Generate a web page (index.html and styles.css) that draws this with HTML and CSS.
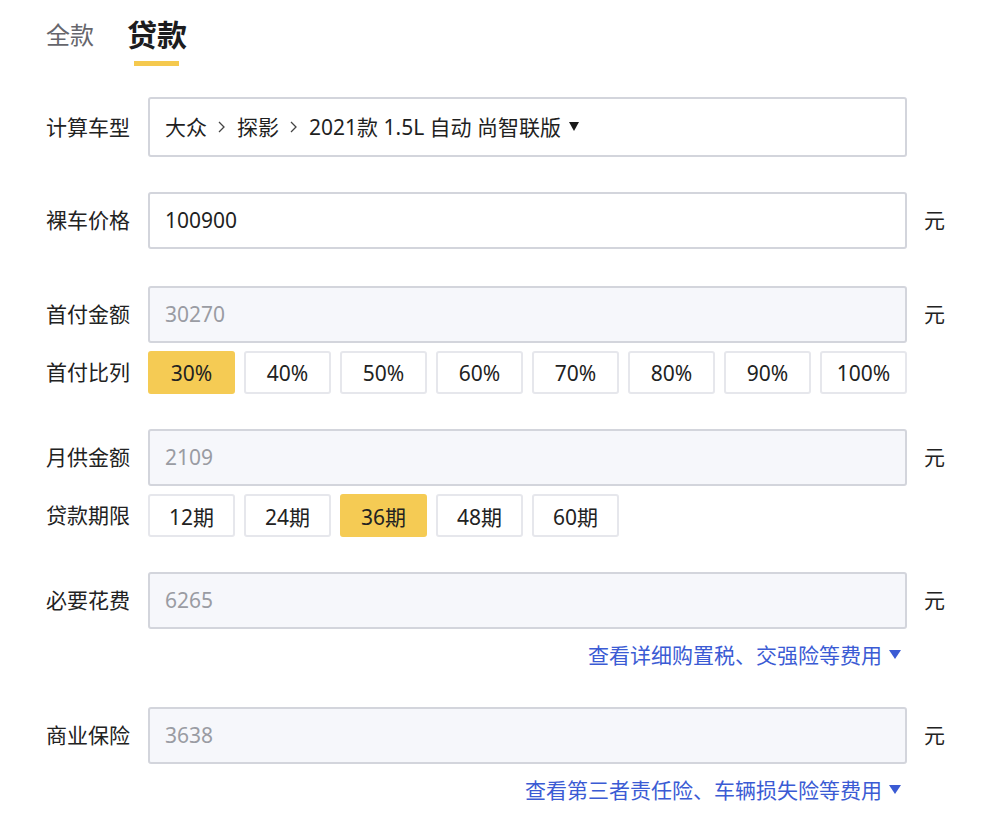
FILE: index.html
```html
<!DOCTYPE html>
<html lang="zh">
<head>
<meta charset="utf-8">
<link rel="stylesheet" href="styles.css">
</head>
<body>
<div class="page">
  <div class="tabs">
    <div class="tab">全款</div>
    <div class="tab active">贷款</div>
  </div>

  <div class="row first">
    <div class="label">计算车型</div>
    <div class="field model">大众<svg class="sep" width="7" height="12" viewBox="0 0 7 12"><path d="M1 1 L6 6 L1 11" fill="none" stroke="#444" stroke-width="1.3"/></svg>探影<svg class="sep" width="7" height="12" viewBox="0 0 7 12"><path d="M1 1 L6 6 L1 11" fill="none" stroke="#444" stroke-width="1.3"/></svg>2021款 1.5L 自动 尚智联版<span class="caret"></span></div>
  </div>

  <div class="row second">
    <div class="label">裸车价格</div>
    <div class="field white">100900</div>
    <div class="unit">元</div>
  </div>

  <div class="group g1">
    <div class="row">
      <div class="label">首付金额</div>
      <div class="field grey">30270</div>
      <div class="unit">元</div>
    </div>
    <div class="row opts-row">
      <div class="label">首付比列</div>
      <div class="opts">
        <div class="opt on">30%</div>
        <div class="opt">40%</div>
        <div class="opt">50%</div>
        <div class="opt">60%</div>
        <div class="opt">70%</div>
        <div class="opt">80%</div>
        <div class="opt">90%</div>
        <div class="opt">100%</div>
      </div>
    </div>
  </div>

  <div class="group">
    <div class="row">
      <div class="label">月供金额</div>
      <div class="field grey">2109</div>
      <div class="unit">元</div>
    </div>
    <div class="row opts-row">
      <div class="label">贷款期限</div>
      <div class="opts">
        <div class="opt">12期</div>
        <div class="opt">24期</div>
        <div class="opt on">36期</div>
        <div class="opt">48期</div>
        <div class="opt">60期</div>
      </div>
    </div>
  </div>

  <div class="group">
    <div class="row">
      <div class="label">必要花费</div>
      <div class="field grey">6265</div>
      <div class="unit">元</div>
    </div>
    <div class="link">查看详细购置税、交强险等费用<span class="bcaret"></span></div>
  </div>

  <div class="group">
    <div class="row">
      <div class="label">商业保险</div>
      <div class="field grey">3638</div>
      <div class="unit">元</div>
    </div>
    <div class="link">查看第三者责任险、车辆损失险等费用<span class="bcaret"></span></div>
  </div>
</div>
</body>
</html>
```

FILE: styles.css
```css
* { box-sizing: border-box; }
html, body { margin: 0; padding: 0; background: #fff; }
body {
  font-family: "Noto Sans", "Noto Sans CJK SC", sans-serif;
  color: #222;
  width: 996px;
  height: 814px;
  overflow: hidden;
}
.page { padding: 3px 0 0 46px; }

.tabs { display: flex; align-items: flex-end; gap: 33px; height: 54px; }
.tab {
  font-size: 24px;
  color: #66666c;
  line-height: 44px;
  position: relative;
}
.tab.active {
  font-size: 30px;
  font-weight: 700;
  color: #1c1c1e;
  line-height: 44px;
}
.tab.active::after {
  content: "";
  position: absolute;
  left: 7px;
  width: 45px;
  bottom: -9px;
  height: 5px;
  background: #f5c94e;
}

.row { display: flex; align-items: center; margin-top: 35px; }
.row.first { margin-top: 40px; }
.group.g1 > .row:first-child { margin-top: 37px; }
.label {
  width: 102px;
  flex: none;
  font-size: 21px;
  color: #222;
  padding-bottom: 3px;
}
.field {
  width: 759px;
  height: 57px;
  flex: none;
  border: 2px solid #d3d5dc;
  border-radius: 3px;
  padding-left: 15px;
  padding-bottom: 1px;
  display: flex;
  align-items: center;
  font-size: 21px;
}
.field.white { background: #fff; color: #1f1f1f; }
.field.grey { background: #f6f7fb; color: #9a9ca3; }
.field.model { height: 60px; color: #1f1f1f; padding-bottom: 3px; }
.sep { margin: 2px 12px 0 11px; flex: none; }
.caret {
  display: inline-block;
  width: 0; height: 0;
  border-left: 5.5px solid transparent;
  border-right: 5.5px solid transparent;
  border-top: 9px solid #1a1a1a;
  margin-left: 8px;
  margin-top: 2px;
}
.unit { margin-left: 17px; font-size: 21px; color: #222; padding-bottom: 3px; }

.group .row + .row.opts-row { margin-top: 8px; }
.opts { display: flex; gap: 9px; }
.opt {
  width: 87px;
  height: 43px;
  border: 2px solid #e6e7ec;
  border-radius: 3px;
  background: #fff;
  display: flex;
  align-items: center;
  justify-content: center;
  font-size: 21px;
  color: #222;
}
.opt.on { background: #f5cb54; border-color: #f5cb54; }

.link {
  width: 861px;
  text-align: right;
  font-size: 21px;
  color: #3b5bd4;
  margin-top: 9px;
  line-height: 34px;
  padding-right: 6px;
}
.bcaret {
  display: inline-block;
  width: 0; height: 0;
  border-left: 6px solid transparent;
  border-right: 6px solid transparent;
  border-top: 9px solid #3b5bd4;
  margin-left: 7px;
  vertical-align: 4px;
}
```
